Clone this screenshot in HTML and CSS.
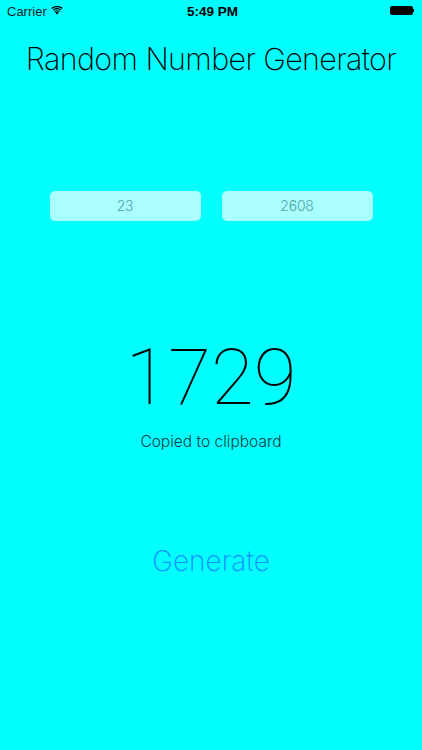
FILE: index.html
```html
<!DOCTYPE html>
<html lang="en">
<head>
    <meta charset="UTF-8">
    <meta name="viewport" content="width=device-width, initial-scale=1.0">
    <title>Random Number Generator</title>
    <link rel="stylesheet" href="styles.css">
</head>
<body>
    <div class="status-bar">
        <div class="status-left">
            <span>Carrier</span>
            <svg class="wifi" width="12" height="9" viewBox="0 0 14 10">
                <path d="M7 9.8 4.9 7.3C6.1 6.2 7.9 6.2 9.1 7.3Z" fill="#000"/>
                <path d="M3.7 5.9C5.6 4.2 8.4 4.2 10.3 5.9L9.5 6.8C8 5.5 6 5.5 4.5 6.8Z" fill="#000"/>
                <path d="M2 4C4.9 1.5 9.1 1.5 12 4L11.1 5C8.7 3 5.3 3 2.9 5Z" fill="#000"/>
                <path d="M.3 2.2C4.2-.9 9.8-.9 13.7 2.2L12.8 3.2C9.4.5 4.6.5 1.2 3.2Z" fill="#000"/>
            </svg>
        </div>
        <div class="status-time">5:49 PM</div>
        <div class="status-right">
            <div class="battery"></div>
            <div class="battery-tip"></div>
        </div>
    </div>
    <h1>Random Number Generator</h1>
    <div class="range-inputs">
        <input type="text" class="range-input" value="23">
        <input type="text" class="range-input" value="2608">
    </div>
    <div class="result">1729</div>
    <div class="copied">Copied to clipboard</div>
    <button class="generate">Generate</button>
</body>
</html>
```

FILE: styles.css
```css
body {
    margin: 0;
    height: 750px;
    overflow: hidden;
    background-color: #00ffff;
    color: #000;
    font-family: Inter, "Liberation Sans", sans-serif;
    text-align: center;
}
.status-bar {
    display: flex;
    align-items: center;
    height: 22px;
    padding: 0 8px 0 7px;
    font-family: "Liberation Sans", Arial, sans-serif;
    font-size: 13px;
}
.status-left {
    flex: 1;
    display: flex;
    align-items: center;
    gap: 4px;
    color: #222;
}
.wifi {
    margin-bottom: 1px;
}
.status-time {
    margin-left: 4px;
    font-weight: bold;
    font-size: 13.5px;
}
.status-right {
    flex: 1;
    display: flex;
    align-items: center;
    justify-content: flex-end;
}
.battery {
    width: 23px;
    height: 9px;
    margin-bottom: 2px;
    background-color: #000;
    border-radius: 2px;
}
.battery-tip {
    width: 1px;
    height: 3px;
    margin-bottom: 2px;
    background-color: #000;
}
h1 {
    margin: 18px 0 0;
    font-size: 30.5px;
    line-height: 38px;
    font-weight: 200;
    letter-spacing: -0.65px;
    color: #000;
}
.range-inputs {
    display: flex;
    justify-content: center;
    gap: 21px;
    margin-top: 113px;
}
.range-input {
    box-sizing: border-box;
    width: 151px;
    height: 30px;
    padding: 0 0 2px;
    border: none;
    border-radius: 5px;
    background-color: #aaffff;
    color: #4f9ea6;
    font-family: Inter, "Liberation Sans", sans-serif;
    font-size: 14px;
    font-weight: 300;
    letter-spacing: -0.2px;
    text-align: center;
}
.result {
    margin-top: 112px;
    font-family: Roboto, Inter, sans-serif;
    font-size: 78px;
    line-height: 90px;
    font-weight: 100;
}
.copied {
    margin-top: 9px;
    font-size: 15.5px;
    line-height: 20px;
    font-weight: 300;
    color: #0a3a40;
}
.generate {
    display: block;
    margin: 91px auto 0;
    padding: 0;
    border: none;
    background: none;
    color: #1a8cff;
    font-family: Inter, "Liberation Sans", sans-serif;
    font-size: 28px;
    line-height: 36px;
    font-weight: 200;
    cursor: pointer;
}
```
